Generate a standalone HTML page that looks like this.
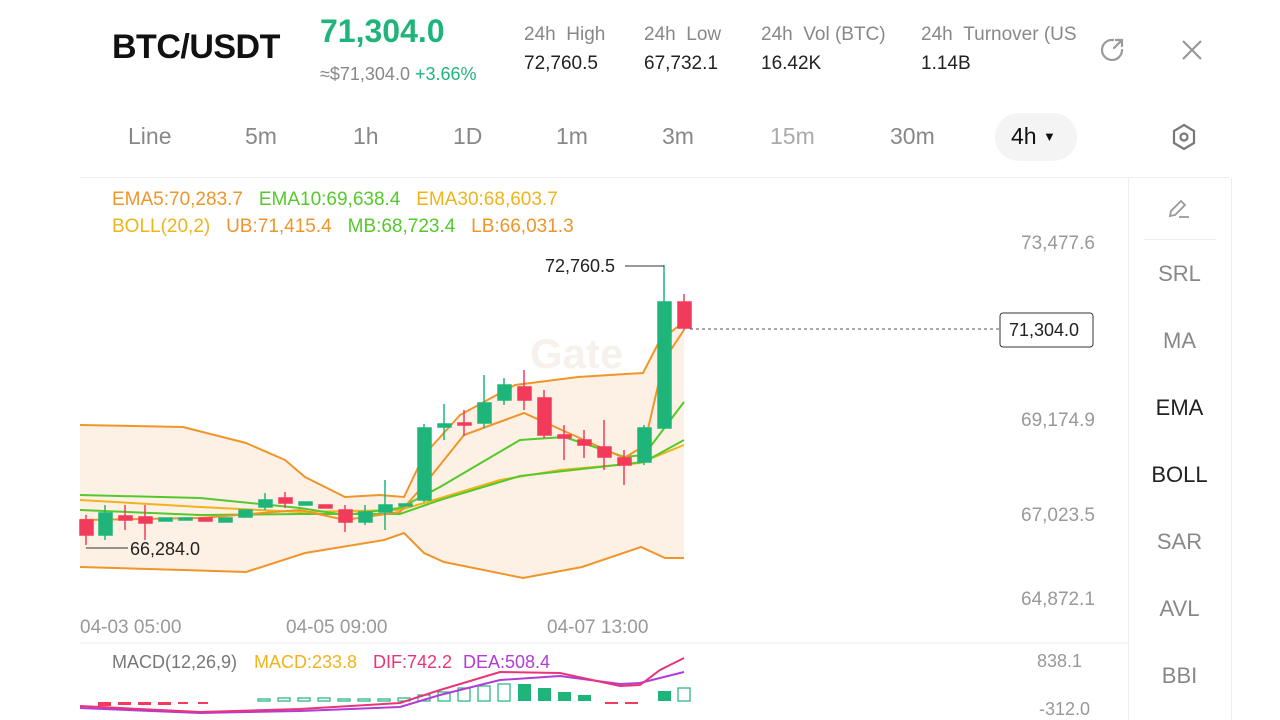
<!DOCTYPE html>
<html><head><meta charset="utf-8"><style>
body{margin:0;width:1280px;height:720px;background:#fff;font-family:"Liberation Sans",sans-serif;overflow:hidden;position:relative}
.a{position:absolute;white-space:nowrap}
.g{color:#888}
.t{font-size:23px;top:123px}
.r{left:1128px;width:103px;text-align:center;font-size:22px}
</style></head><body>
<div class="a" style="left:112px;top:28px;font-size:34px;font-weight:bold;color:#111;letter-spacing:-0.5px">BTC/USDT</div>
<div class="a" style="left:320px;top:13px;font-size:32px;font-weight:bold;color:#1fb57a">71,304.0</div>
<div class="a g" style="left:320px;top:64px;font-size:18px">≈$71,304.0 <span style="color:#1fb57a">+3.66%</span></div>
<div class="a g" style="left:524px;top:24px;font-size:19px">24h&nbsp;&nbsp;High</div>
<div class="a" style="left:524px;top:53px;font-size:19px;color:#222">72,760.5</div>
<div class="a g" style="left:644px;top:24px;font-size:19px">24h&nbsp;&nbsp;Low</div>
<div class="a" style="left:644px;top:53px;font-size:19px;color:#222">67,732.1</div>
<div class="a g" style="left:761px;top:24px;font-size:19px">24h&nbsp;&nbsp;Vol (BTC)</div>
<div class="a" style="left:761px;top:53px;font-size:19px;color:#222">16.42K</div>
<div class="a g" style="left:921px;top:24px;font-size:19px;width:165px;overflow:hidden">24h&nbsp;&nbsp;Turnover (US</div>
<div class="a" style="left:921px;top:53px;font-size:19px;color:#222">1.14B</div>
<svg class="a" style="left:1098px;top:36px" width="28" height="28" viewBox="0 0 28 28" fill="none" stroke="#999" stroke-width="2.2" stroke-linecap="round"><path d="M15 4A10 10 0 1 0 24 14"/><path d="M16 12L24 4M18 4h6v6"/></svg>
<svg class="a" style="left:1180px;top:38px" width="24" height="24" stroke="#999" stroke-width="2.2"><path d="M3 3L21 21M21 3L3 21"/></svg>

<div class="a g t" style="left:128px">Line</div>
<div class="a g t" style="left:245px">5m</div>
<div class="a g t" style="left:353px">1h</div>
<div class="a g t" style="left:453px">1D</div>
<div class="a g t" style="left:556px">1m</div>
<div class="a g t" style="left:662px">3m</div>
<div class="a t" style="left:770px;color:#aaa">15m</div>
<div class="a g t" style="left:890px">30m</div>
<div class="a" style="left:995px;top:113px;width:82px;height:48px;border-radius:24px;background:#f4f4f4"></div>
<div class="a t" style="left:1011px;color:#111">4h <span style="font-size:13px;vertical-align:3px">▼</span></div>
<svg class="a" style="left:1170px;top:122px" width="28" height="30" fill="none" stroke="#777" stroke-width="2.2"><path d="M14 3L24 9v12l-10 6L4 21V9z"/><circle cx="14" cy="15" r="3.5"/></svg>

<div class="a" style="left:80px;top:177px;width:1150px;height:1px;background:#eee"></div>
<div class="a" style="left:1128px;top:178px;width:1px;height:542px;background:#eee"></div>
<div class="a" style="left:1231px;top:178px;width:1px;height:542px;background:#eee"></div>
<div class="a" style="left:1144px;top:239px;width:72px;height:1px;background:#eee"></div>
<svg class="a" style="left:1166px;top:196px" width="28" height="26" fill="none" stroke="#999" stroke-width="1.8"><path d="M4 20l1-5L15 5l4 4L9 19z"/><path d="M13 21h10"/></svg>
<div class="a r" style="top:261px;color:#888">SRL</div>
<div class="a r" style="top:328px;color:#888">MA</div>
<div class="a r" style="top:395px;color:#222">EMA</div>
<div class="a r" style="top:462px;color:#222">BOLL</div>
<div class="a r" style="top:529px;color:#888">SAR</div>
<div class="a r" style="top:596px;color:#888">AVL</div>
<div class="a r" style="top:663px;color:#888">BBI</div>

<div class="a" style="left:112px;top:189px;font-size:19px"><span style="color:#f0952a">EMA5:70,283.7</span>&nbsp;&nbsp;&nbsp;<span style="color:#55c92c">EMA10:69,638.4</span>&nbsp;&nbsp;&nbsp;<span style="color:#f0b41a">EMA30:68,603.7</span></div>
<div class="a" style="left:112px;top:216px;font-size:19px"><span style="color:#f0b41a">BOLL(20,2)</span>&nbsp;&nbsp;&nbsp;<span style="color:#f0952a">UB:71,415.4</span>&nbsp;&nbsp;&nbsp;<span style="color:#55c92c">MB:68,723.4</span>&nbsp;&nbsp;&nbsp;<span style="color:#f0952a">LB:66,031.3</span></div>

<div class="a" style="left:1021px;top:233px;font-size:19px;color:#999">73,477.6</div>
<div class="a" style="left:1021px;top:410px;font-size:19px;color:#999">69,174.9</div>
<div class="a" style="left:1021px;top:505px;font-size:19px;color:#999">67,023.5</div>
<div class="a" style="left:1021px;top:589px;font-size:19px;color:#999">64,872.1</div>
<div class="a" style="left:80px;top:617px;font-size:19px;color:#999">04-03 05:00</div>
<div class="a" style="left:286px;top:617px;font-size:19px;color:#999">04-05 09:00</div>
<div class="a" style="left:547px;top:617px;font-size:19px;color:#999">04-07 13:00</div>

<svg class="a" style="left:0;top:0" width="1128" height="720">
<path d="M80 425L183 427L246 443L285 460L305 477L345 497L380 495L404 497L424 455L460 415L515 385L578 377L643 373L660 340L684 322L684 558L665 558L641 547L582 567L523 578L444 562L424 553L404 533L384 540L305 553L246 572L183 570L80 567Z" fill="#fdf1e6"/>
<text x="530" y="368" font-size="42" font-weight="bold" fill="#f7f1ec" font-family="Liberation Sans">Gate</text>
<g fill="none" stroke-width="2">
<path d="M80 425L183 427L246 443L285 460L305 477L345 497L380 495L404 497L424 455L460 415L515 385L578 377L643 373L660 340L684 322" stroke="#f0952a"/>
<path d="M80 567L183 570L246 572L305 553L384 540L404 533L424 553L444 562L523 578L582 567L641 547L665 558L684 558" stroke="#f0952a"/>
<path d="M80 500L200 507L300 512L400 510L424 503L500 480L560 470L640 463L684 445" stroke="#f0b41a"/>
<path d="M80 495L200 498L300 508L345 515L400 508L440 487L520 440L564 437L604 450L624 457L644 455L684 402" stroke="#55c92c"/>
<path d="M80 510L200 515L300 514L400 514L440 500L520 476L644 462L684 440" stroke="#55c92c"/>
<path d="M80 520L200 518L300 510L345 520L400 512L424 485L464 435L524 413L584 440L624 458L644 446L664 360L684 330" stroke="#f0952a"/>
</g>
<g stroke-width="1.5">
<g stroke="#f23b5b" fill="#f23b5b"><line x1="86" y1="515" x2="86" y2="545"/><rect x="80" y="520" width="13" height="15"/><line x1="125" y1="505" x2="125" y2="530"/><rect x="119" y="516" width="13" height="4"/><line x1="145" y1="505" x2="145" y2="540"/><rect x="139" y="517" width="13" height="6"/><rect x="199" y="518" width="13" height="3"/><line x1="285" y1="492" x2="285" y2="508"/><rect x="279" y="498" width="13" height="5"/><rect x="319" y="505" width="13" height="3"/><line x1="345" y1="505" x2="345" y2="532"/><rect x="339" y="510" width="13" height="12"/><line x1="464" y1="410" x2="464" y2="436"/><rect x="458" y="423" width="13" height="2"/><line x1="524" y1="370" x2="524" y2="410"/><rect x="518" y="387" width="13" height="13"/><line x1="544" y1="390" x2="544" y2="438"/><rect x="538" y="398" width="13" height="37"/><line x1="564" y1="425" x2="564" y2="460"/><rect x="558" y="435" width="13" height="3"/><line x1="584" y1="430" x2="584" y2="458"/><rect x="578" y="440" width="13" height="5"/><line x1="604" y1="420" x2="604" y2="470"/><rect x="598" y="447" width="13" height="10"/><line x1="624" y1="450" x2="624" y2="485"/><rect x="618" y="458" width="13" height="7"/><line x1="684" y1="294" x2="684" y2="330"/><rect x="678" y="302" width="13" height="26"/></g>
<g stroke="#1fb57a" fill="#1fb57a"><line x1="105" y1="505" x2="105" y2="540"/><rect x="99" y="513" width="13" height="22"/><rect x="159" y="518" width="13" height="3"/><rect x="179" y="518" width="13" height="2"/><rect x="219" y="518" width="13" height="4"/><rect x="239" y="510" width="13" height="7"/><line x1="265" y1="493" x2="265" y2="510"/><rect x="259" y="500" width="13" height="7"/><rect x="299" y="502" width="13" height="3"/><line x1="365" y1="505" x2="365" y2="525"/><rect x="359" y="512" width="13" height="10"/><line x1="385" y1="480" x2="385" y2="530"/><rect x="379" y="505" width="13" height="7"/><rect x="399" y="504" width="13" height="2"/><line x1="424" y1="424" x2="424" y2="502"/><rect x="418" y="428" width="13" height="72"/><line x1="444" y1="404" x2="444" y2="440"/><rect x="438" y="424" width="13" height="3"/><line x1="484" y1="375" x2="484" y2="428"/><rect x="478" y="403" width="13" height="20"/><line x1="504" y1="378" x2="504" y2="405"/><rect x="498" y="385" width="13" height="15"/><line x1="644" y1="425" x2="644" y2="465"/><rect x="638" y="428" width="13" height="34"/><line x1="664" y1="265" x2="664" y2="302"/><rect x="658" y="302" width="13" height="126"/></g>
</g>
<path d="M625 266H664" stroke="#333" stroke-width="1"/>
<text x="545" y="272" font-size="18" fill="#222">72,760.5</text>
<path d="M86 548H128" stroke="#333" stroke-width="1"/>
<text x="130" y="555" font-size="18" fill="#222">66,284.0</text>
<path d="M690 329H1000" stroke="#555" stroke-dasharray="3,3"/>
<rect x="1000" y="313" width="93" height="34" rx="3" fill="#fff" stroke="#333"/>
<text x="1009" y="336" font-size="18" fill="#222">71,304.0</text>
<line x1="80" y1="643" x2="1128" y2="643" stroke="#eee"/>
<text x="112" y="668" font-size="18" fill="#777">MACD(12,26,9)</text>
<text x="254" y="668" font-size="18" fill="#f0b41a">MACD:233.8</text>
<text x="373" y="668" font-size="18" fill="#e8357a">DIF:742.2</text>
<text x="463" y="668" font-size="18" fill="#b23cd6">DEA:508.4</text>
<g fill="#f23b5b"><rect x="98" y="702" width="13" height="4"/><rect x="118" y="702" width="13" height="3"/><rect x="138" y="702" width="13" height="3"/><rect x="158" y="702" width="13" height="3"/><rect x="178" y="702" width="10" height="2"/><rect x="198" y="702" width="10" height="2"/><rect x="605" y="702" width="13" height="2"/><rect x="625" y="702" width="13" height="2"/></g>
<g fill="none" stroke="#1fb57a" stroke-width="1.2"><rect x="258" y="699" width="12" height="2"/><rect x="278" y="698" width="12" height="3"/><rect x="298" y="698" width="12" height="3"/><rect x="318" y="698" width="12" height="3"/><rect x="338" y="699" width="12" height="2"/><rect x="358" y="699" width="12" height="2"/><rect x="378" y="699" width="12" height="2"/><rect x="398" y="698" width="12" height="3"/><rect x="418" y="695" width="12" height="6"/><rect x="438" y="692" width="12" height="9"/><rect x="458" y="688" width="12" height="13"/><rect x="478" y="686" width="12" height="15"/><rect x="498" y="684" width="12" height="17"/><rect x="678" y="688" width="12" height="13"/></g>
<g fill="#1fb57a"><rect x="518" y="684" width="13" height="17"/><rect x="538" y="688" width="13" height="13"/><rect x="558" y="692" width="13" height="9"/><rect x="578" y="695" width="13" height="6"/><rect x="658" y="691" width="13" height="10"/></g>
<path d="M80 708L200 713L300 711L400 707L440 695L500 680L560 676L620 684L640 683L684 672" fill="none" stroke="#b23cd6" stroke-width="2"/>
<path d="M80 706L200 712L300 709L400 703L440 690L500 672L560 673L620 686L640 685L660 670L684 658" fill="none" stroke="#e8357a" stroke-width="2"/>
</svg>
<div class="a" style="left:1037px;top:651px;font-size:18px;color:#999">838.1</div>
<div class="a" style="left:1039px;top:699px;font-size:18px;color:#999">-312.0</div>
</body></html>
